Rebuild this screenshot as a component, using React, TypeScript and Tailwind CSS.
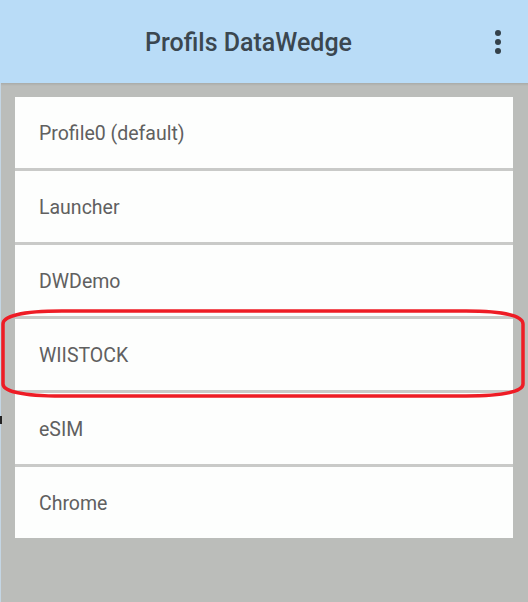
const profiles = ["Profile0 (default)", "Launcher", "DWDemo", "WIISTOCK", "eSIM", "Chrome"];

export default function App() {
  return (
    <div className="relative w-[528px] h-[602px] overflow-hidden bg-[#bbbdba] font-['Roboto',sans-serif]">
      {/* toolbar */}
      <div className="flex h-[83px] items-center bg-[#b9dcf7] pl-[145px] pr-[27px]">
        <h1 className="flex-1 pt-[2px] text-[25px] font-medium text-[#3b4750]">Profils DataWedge</h1>
        <div className="flex flex-col gap-[3px]">
          <span className="block h-[6px] w-[6px] rounded-full bg-[#34414a]" />
          <span className="block h-[6px] w-[6px] rounded-full bg-[#34414a]" />
          <span className="block h-[6px] w-[6px] rounded-full bg-[#34414a]" />
        </div>
      </div>
      <div className="h-[3px] bg-gradient-to-b from-[#a9aba8] to-[#bbbdba]" />

      <div className="mx-[15px] mt-[11px] flex flex-col gap-[3px] bg-[#c9cac8]">
        {profiles.map((p) => (
          <div key={p} className="flex h-[71px] items-center bg-[#fdfefd] pl-[24px] pt-[2px] text-[19.5px] text-[#606060]">
            {p}
          </div>
        ))}
      </div>

      {/* left edge line + stray mark */}
      <div className="absolute left-0 top-[83px] h-[519px] w-px bg-[#c4d6e4]" />
      <div className="absolute left-0 top-[416px] h-[8px] w-[2px] bg-[#222]" />

      {/* red highlight */}
      <svg className="absolute left-0 top-[300px]" width="528" height="110" viewBox="0 0 528 110">
        <path
          d="M62 11 L466 11 C505 11 523 16 523 24 L523 84 C523 91 505 96 466 96 L62 96 C22 96 3 91 3 84 L3 24 C3 16 22 11 62 11 Z"
          fill="none"
          stroke="#ee1c25"
          strokeWidth="3.5"
        />
      </svg>
    </div>
  );
}
